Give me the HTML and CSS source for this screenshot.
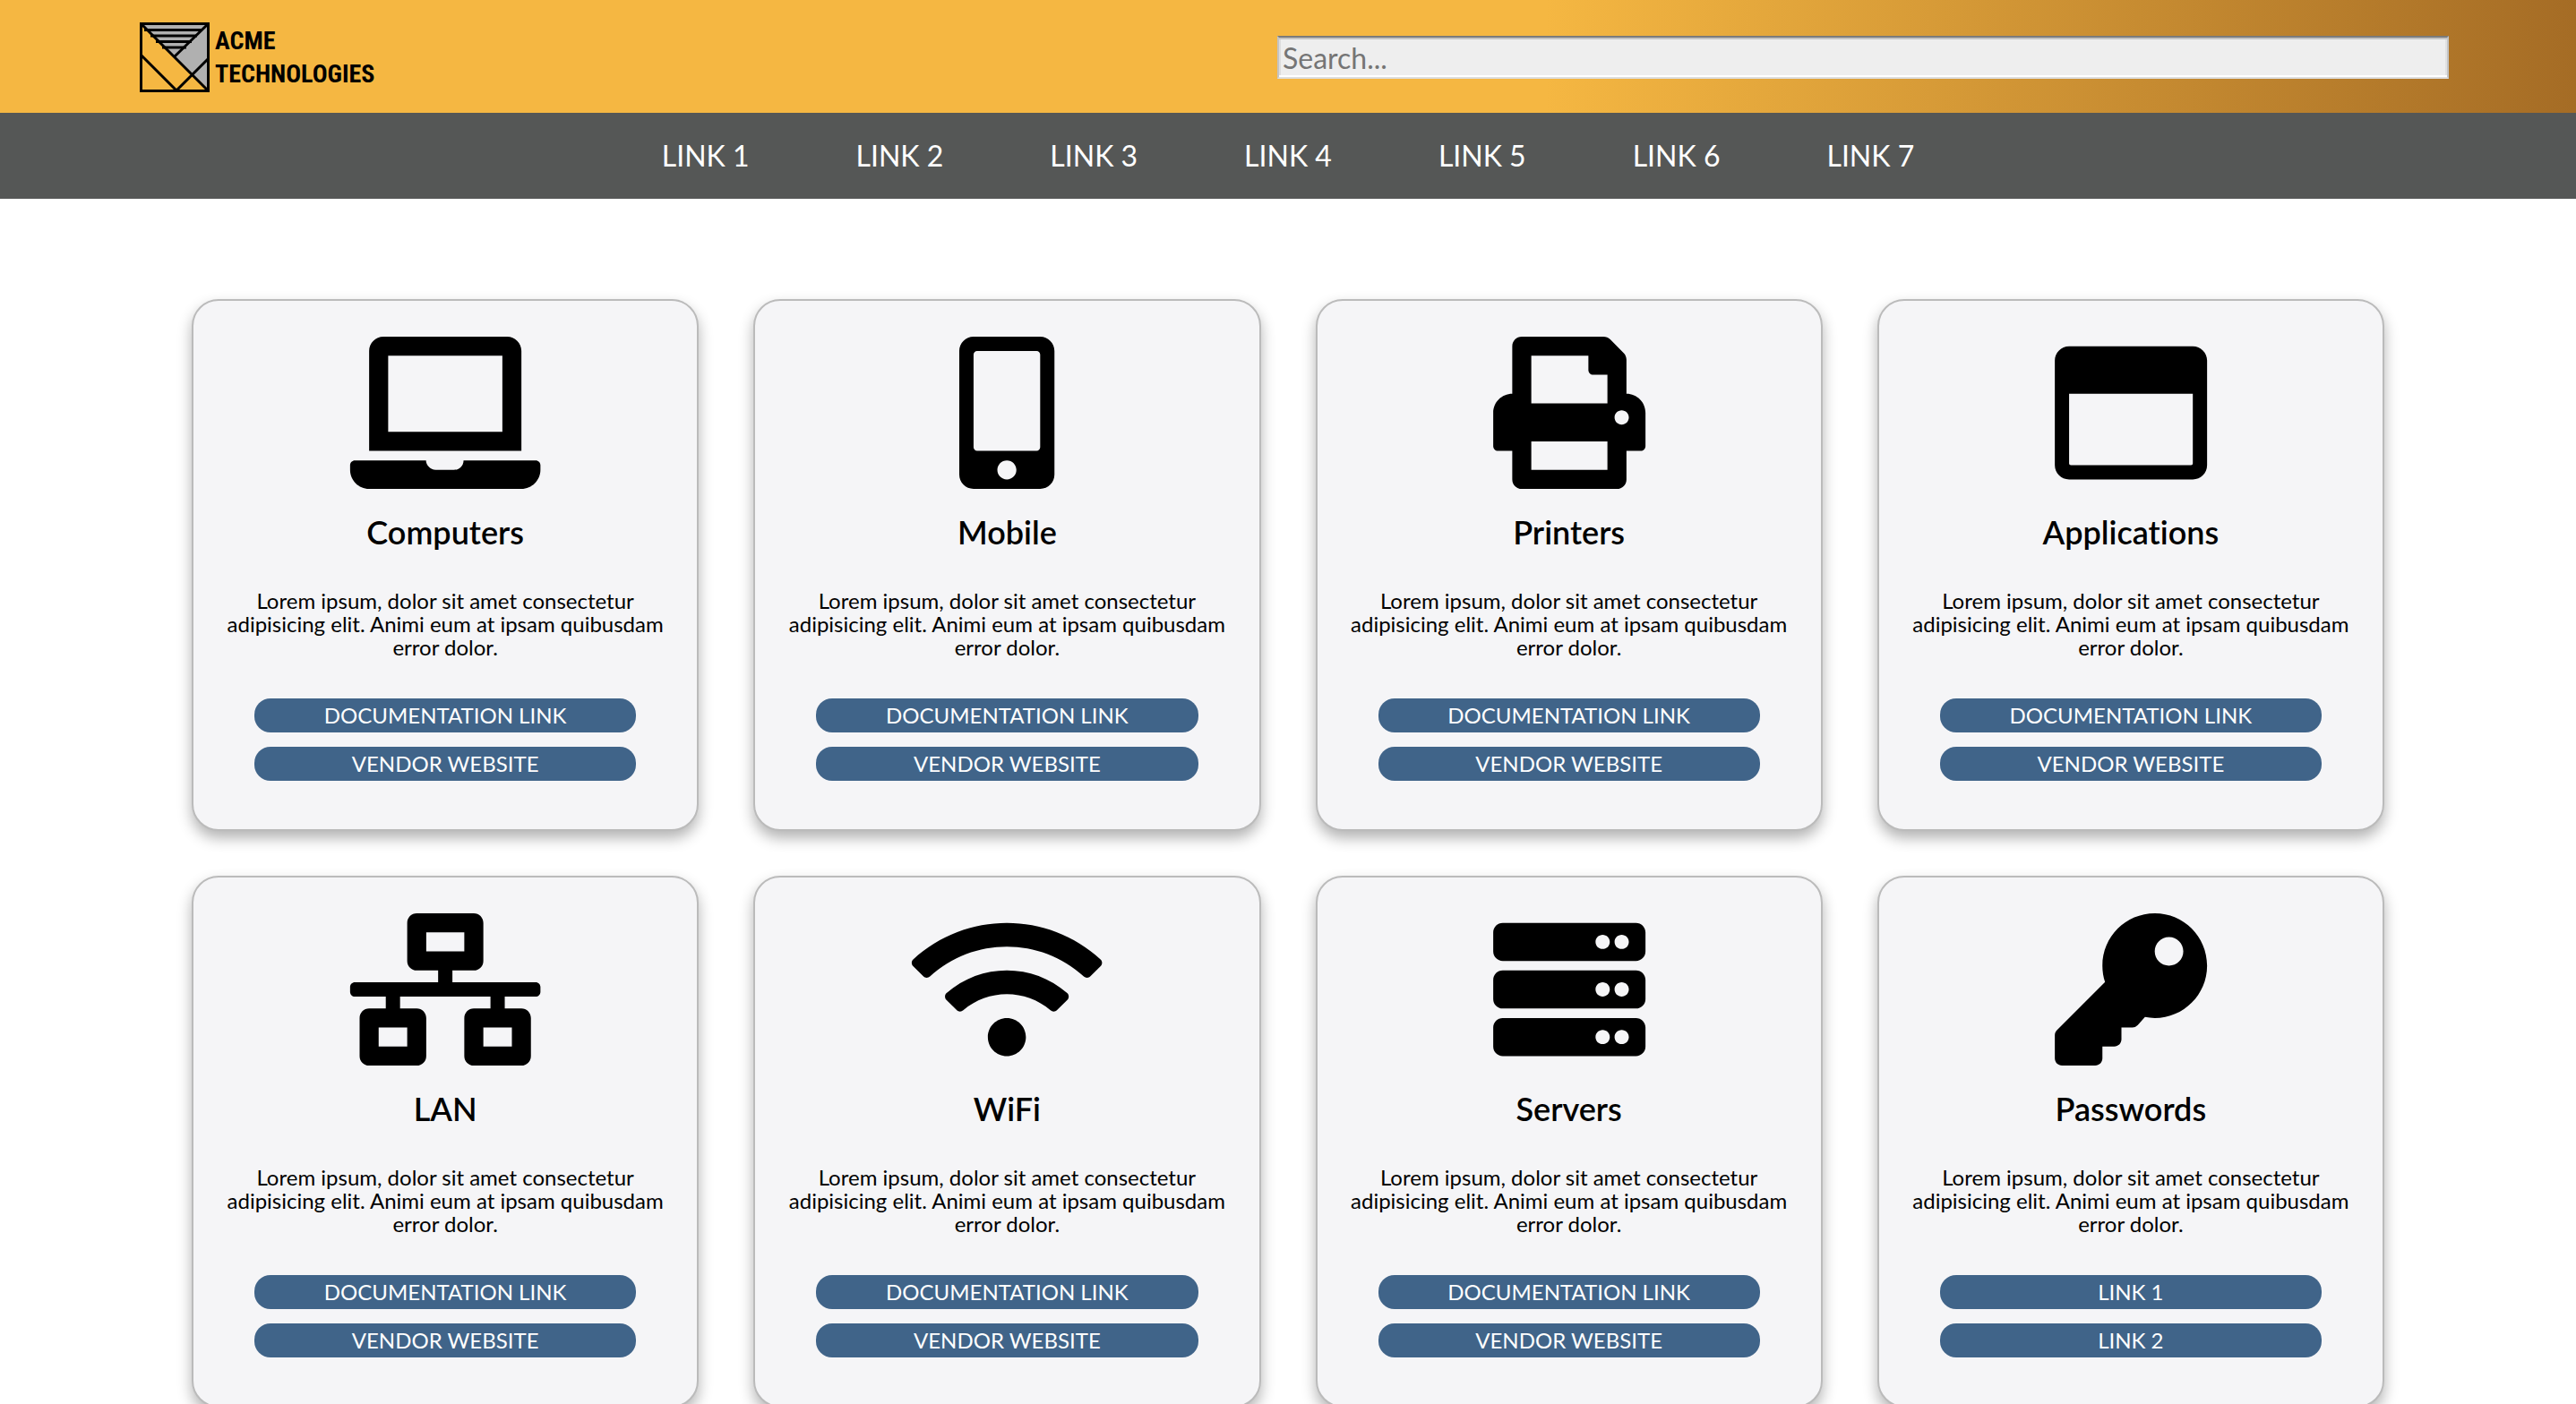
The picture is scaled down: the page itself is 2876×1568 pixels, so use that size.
FILE: index.html
```html
<!DOCTYPE html>
<html lang="en">
<head>
<meta charset="utf-8">
<title>Acme Technologies</title>
<link rel="stylesheet" href="styles.css">
</head>
<body>
<header class="header">
  <a class="logo" href="#">
    <svg class="logo-mark" viewBox="0 0 78 78" aria-hidden="true">
      <path fill="#b0b0b0" d="M2 2H76V74L39 38Z"/>
      <path stroke="#000" stroke-width="3" fill="none" d="M5 8.500H70M12 15H64M18 21.500H58M25 28H52"/>
      <path stroke="#000" stroke-width="3" fill="none" d="M2 2L76 76M76 2L39 38M2 37L41 76L76 41"/>
      <path stroke="#000" stroke-width="3" fill="none" d="M1.500 1.500H76.500V76.500H1.500Z"/>
    </svg>
    <span class="logo-text">ACME<br>TECHNOLOGIES</span>
  </a>
  <input class="search" type="text" placeholder="Search..." aria-label="Search">
</header>
<nav class="nav">
  <a href="#">LINK 1</a>
  <a href="#">LINK 2</a>
  <a href="#">LINK 3</a>
  <a href="#">LINK 4</a>
  <a href="#">LINK 5</a>
  <a href="#">LINK 6</a>
  <a href="#">LINK 7</a>
</nav>
<main class="cards">
  <section class="card">
    <svg class="icon" viewBox="0 0 640 512" aria-hidden="true"><path d="M624 416H381.540c-.74 19.810-14.710 32-32.740 32H288c-18.690 0-33.020-17.470-32.770-32H16c-8.800 0-16 7.200-16 16v16c0 35.200 28.800 64 64 64h512c35.200 0 64-28.800 64-64v-16c0-8.800-7.200-16-16-16zM576 48c0-26.400-21.600-48-48-48H112C85.600 0 64 21.600 64 48v336h512V48zm-64 272H128V64h384v256z"/></svg>
    <h2>Computers</h2>
    <p>Lorem ipsum, dolor sit amet consectetur adipisicing elit. Animi eum at ipsam quibusdam error dolor.</p>
    <a class="button" href="#">DOCUMENTATION LINK</a>
    <a class="button" href="#">VENDOR WEBSITE</a>
  </section>
  <section class="card">
    <svg class="icon" viewBox="0 0 320 512" aria-hidden="true"><path d="M272 0H48C21.500 0 0 21.500 0 48v416c0 26.500 21.500 48 48 48h224c26.500 0 48-21.500 48-48V48c0-26.500-21.500-48-48-48zM160 480c-17.700 0-32-14.300-32-32s14.300-32 32-32 32 14.300 32 32-14.300 32-32 32zm112-108c0 6.600-5.400 12-12 12H60c-6.600 0-12-5.400-12-12V60c0-6.600 5.400-12 12-12h200c6.600 0 12 5.400 12 12v312z"/></svg>
    <h2>Mobile</h2>
    <p>Lorem ipsum, dolor sit amet consectetur adipisicing elit. Animi eum at ipsam quibusdam error dolor.</p>
    <a class="button" href="#">DOCUMENTATION LINK</a>
    <a class="button" href="#">VENDOR WEBSITE</a>
  </section>
  <section class="card">
    <svg class="icon" viewBox="0 0 512 512" aria-hidden="true"><path d="M448 192V77.250c0-8.490-3.370-16.620-9.370-22.630L393.370 9.370c-6-6-14.140-9.370-22.630-9.370H96C78.330 0 64 14.330 64 32v160c-35.350 0-64 28.650-64 64v112c0 8.840 7.160 16 16 16h48v96c0 17.670 14.330 32 32 32h320c17.670 0 32-14.330 32-32v-96h48c8.840 0 16-7.160 16-16V256c0-35.350-28.650-64-64-64zm-64 256H128v-96h256v96zm0-224H128V64h192v48c0 8.840 7.160 16 16 16h48v96zm48 72c-13.250 0-24-10.750-24-24 0-13.260 10.750-24 24-24s24 10.740 24 24c0 13.250-10.750 24-24 24z"/></svg>
    <h2>Printers</h2>
    <p>Lorem ipsum, dolor sit amet consectetur adipisicing elit. Animi eum at ipsam quibusdam error dolor.</p>
    <a class="button" href="#">DOCUMENTATION LINK</a>
    <a class="button" href="#">VENDOR WEBSITE</a>
  </section>
  <section class="card">
    <svg class="icon" viewBox="0 0 512 512" aria-hidden="true"><path d="M464 32H48C21.500 32 0 53.500 0 80v352c0 26.500 21.500 48 48 48h416c26.500 0 48-21.500 48-48V80c0-26.500-21.500-48-48-48zm0 394c0 3.300-2.700 6-6 6H54c-3.300 0-6-2.700-6-6V192h416v234z"/></svg>
    <h2>Applications</h2>
    <p>Lorem ipsum, dolor sit amet consectetur adipisicing elit. Animi eum at ipsam quibusdam error dolor.</p>
    <a class="button" href="#">DOCUMENTATION LINK</a>
    <a class="button" href="#">VENDOR WEBSITE</a>
  </section>
  <section class="card">
    <svg class="icon" viewBox="0 0 640 512" aria-hidden="true"><path d="M640 264v-16c0-8.840-7.160-16-16-16H344v-40h72c17.670 0 32-14.330 32-32V32c0-17.670-14.330-32-32-32H224c-17.670 0-32 14.330-32 32v128c0 17.670 14.330 32 32 32h72v40H16c-8.840 0-16 7.160-16 16v16c0 8.840 7.160 16 16 16h104v40H64c-17.670 0-32 14.330-32 32v128c0 17.670 14.330 32 32 32h160c17.670 0 32-14.330 32-32V352c0-17.670-14.330-32-32-32h-56v-40h304v40h-56c-17.670 0-32 14.330-32 32v128c0 17.670 14.330 32 32 32h160c17.670 0 32-14.330 32-32V352c0-17.670-14.330-32-32-32h-56v-40h104c8.840 0 16-7.160 16-16zM256 128V64h128v64H256zm-64 320H96v-64h96v64zm352 0h-96v-64h96v64z"/></svg>
    <h2>LAN</h2>
    <p>Lorem ipsum, dolor sit amet consectetur adipisicing elit. Animi eum at ipsam quibusdam error dolor.</p>
    <a class="button" href="#">DOCUMENTATION LINK</a>
    <a class="button" href="#">VENDOR WEBSITE</a>
  </section>
  <section class="card">
    <svg class="icon" viewBox="0 0 640 512" aria-hidden="true"><path d="M634.910 154.880C457.740-8.990 182.190-8.930 5.090 154.880c-6.660 6.160-6.790 16.590-.35 22.980l34.240 33.970c6.140 6.100 16.020 6.230 22.400.38 145.920-133.680 371.300-133.710 517.250 0 6.380 5.850 16.260 5.710 22.400-.38l34.240-33.970c6.430-6.390 6.300-16.820-.36-22.980zM320 352c-35.350 0-64 28.650-64 64s28.650 64 64 64 64-28.650 64-64-28.650-64-64-64zm202.670-83.590c-115.260-101.930-290.210-101.820-405.340 0-6.900 6.100-7.120 16.690-.57 23.150l34.440 33.990c6 5.920 15.660 6.320 22.050.8 83.950-72.570 209.740-72.410 293.490 0 6.390 5.520 16.050 5.130 22.050-.8l34.440-33.990c6.560-6.460 6.330-17.060-.56-23.150z"/></svg>
    <h2>WiFi</h2>
    <p>Lorem ipsum, dolor sit amet consectetur adipisicing elit. Animi eum at ipsam quibusdam error dolor.</p>
    <a class="button" href="#">DOCUMENTATION LINK</a>
    <a class="button" href="#">VENDOR WEBSITE</a>
  </section>
  <section class="card">
    <svg class="icon" viewBox="0 0 512 512" aria-hidden="true"><path d="M480 160H32c-17.673 0-32-14.327-32-32V64c0-17.673 14.327-32 32-32h448c17.673 0 32 14.327 32 32v64c0 17.673-14.327 32-32 32zm-48-88c-13.255 0-24 10.745-24 24s10.745 24 24 24 24-10.745 24-24-10.745-24-24-24zm-64 0c-13.255 0-24 10.745-24 24s10.745 24 24 24 24-10.745 24-24-10.745-24-24-24zm112 248H32c-17.673 0-32-14.327-32-32v-64c0-17.673 14.327-32 32-32h448c17.673 0 32 14.327 32 32v64c0 17.673-14.327 32-32 32zm-48-88c-13.255 0-24 10.745-24 24s10.745 24 24 24 24-10.745 24-24-10.745-24-24-24zm-64 0c-13.255 0-24 10.745-24 24s10.745 24 24 24 24-10.745 24-24-10.745-24-24-24zm112 248H32c-17.673 0-32-14.327-32-32v-64c0-17.673 14.327-32 32-32h448c17.673 0 32 14.327 32 32v64c0 17.673-14.327 32-32 32zm-48-88c-13.255 0-24 10.745-24 24s10.745 24 24 24 24-10.745 24-24-10.745-24-24-24zm-64 0c-13.255 0-24 10.745-24 24s10.745 24 24 24 24-10.745 24-24-10.745-24-24-24z"/></svg>
    <h2>Servers</h2>
    <p>Lorem ipsum, dolor sit amet consectetur adipisicing elit. Animi eum at ipsam quibusdam error dolor.</p>
    <a class="button" href="#">DOCUMENTATION LINK</a>
    <a class="button" href="#">VENDOR WEBSITE</a>
  </section>
  <section class="card">
    <svg class="icon" viewBox="0 0 512 512" aria-hidden="true"><path d="M512 176.001C512 273.203 433.202 352 336 352c-11.220 0-22.190-1.062-32.827-3.069l-24.012 27.014A23.999 23.999 0 0 1 261.223 384H224v40c0 13.255-10.745 24-24 24h-40v40c0 13.255-10.745 24-24 24H24c-13.255 0-24-10.745-24-24v-78.059c0-6.365 2.529-12.470 7.029-16.971l161.802-161.802C163.108 213.814 160 195.271 160 176 160 78.798 238.797.001 335.999 0 433.488-.001 512 78.511 512 176.001zM336 128c0 26.510 21.490 48 48 48s48-21.490 48-48-21.490-48-48-48-48 21.490-48 48z"/></svg>
    <h2>Passwords</h2>
    <p>Lorem ipsum, dolor sit amet consectetur adipisicing elit. Animi eum at ipsam quibusdam error dolor.</p>
    <a class="button" href="#">LINK 1</a>
    <a class="button" href="#">LINK 2</a>
  </section>
</main>
</body>
</html>
```
FILE: styles.css
```css
* {
  box-sizing: border-box;
}

body {
  margin: 0;
  background: #fff;
  color: #000;
  font-family: Lato, sans-serif;
  font-variant-ligatures: none;
}

a {
  color: inherit;
  text-decoration: none;
}

.header {
  display: flex;
  align-items: center;
  justify-content: space-between;
  height: 126px;
  padding: 2px 142px 0 156px;
  background: linear-gradient(90deg, #f5b742 60%, #a56c25);
}

.logo {
  display: flex;
  align-items: center;
  gap: 6px;
}

.logo-mark {
  width: 78px;
  height: 78px;
}

.logo-text {
  font-family: "Roboto Condensed", "Liberation Sans Narrow", Roboto, sans-serif;
  font-size: 28px;
  font-weight: 700;
  line-height: 37px;
}

.search {
  width: calc(50% + 19px);
  height: 48px;
  padding: 0 4px;
  border: 2px solid;
  border-color: #7b7b7b #c3c4c5 #ddd;
  background: #eee;
  box-shadow: inset 0 2px #c3c3c3, inset 0 -2px #fff, inset 2px 0 #ddd, inset -2px 0 #e2e2e2;
  font: 32px Lato, sans-serif;
}

.search::placeholder {
  color: #757575;
}

.nav {
  display: flex;
  justify-content: center;
  gap: 119px;
  padding: 28px 0;
  background: #555756;
  color: #fff;
  font-size: 32px;
  line-height: 40px;
}

.cards {
  display: grid;
  grid-template-columns: repeat(4, 1fr);
  gap: 50px 61px;
  padding: 112px 214px;
}

.card {
  display: flex;
  flex-direction: column;
  padding: 40px 34px 54px;
  border: 2px solid #bbb;
  border-radius: 30px;
  background: #f5f5f7;
  box-shadow: 0 8px 16px rgba(0, 0, 0, .3);
  text-align: center;
}

.icon {
  height: 170px;
}

.card h2 {
  margin: 26px 0 42px;
  font-size: 36px;
  font-weight: 600;
  line-height: 44px;
}

.card p {
  margin: 0 0 44px;
  font-size: 24px;
  line-height: 26px;
}

.button {
  margin: 0 34px;
  border-radius: 18px;
  background: #406489;
  color: #fff;
  font-size: 24px;
  line-height: 38px;
}

.button + .button {
  margin-top: 16px;
}
```
